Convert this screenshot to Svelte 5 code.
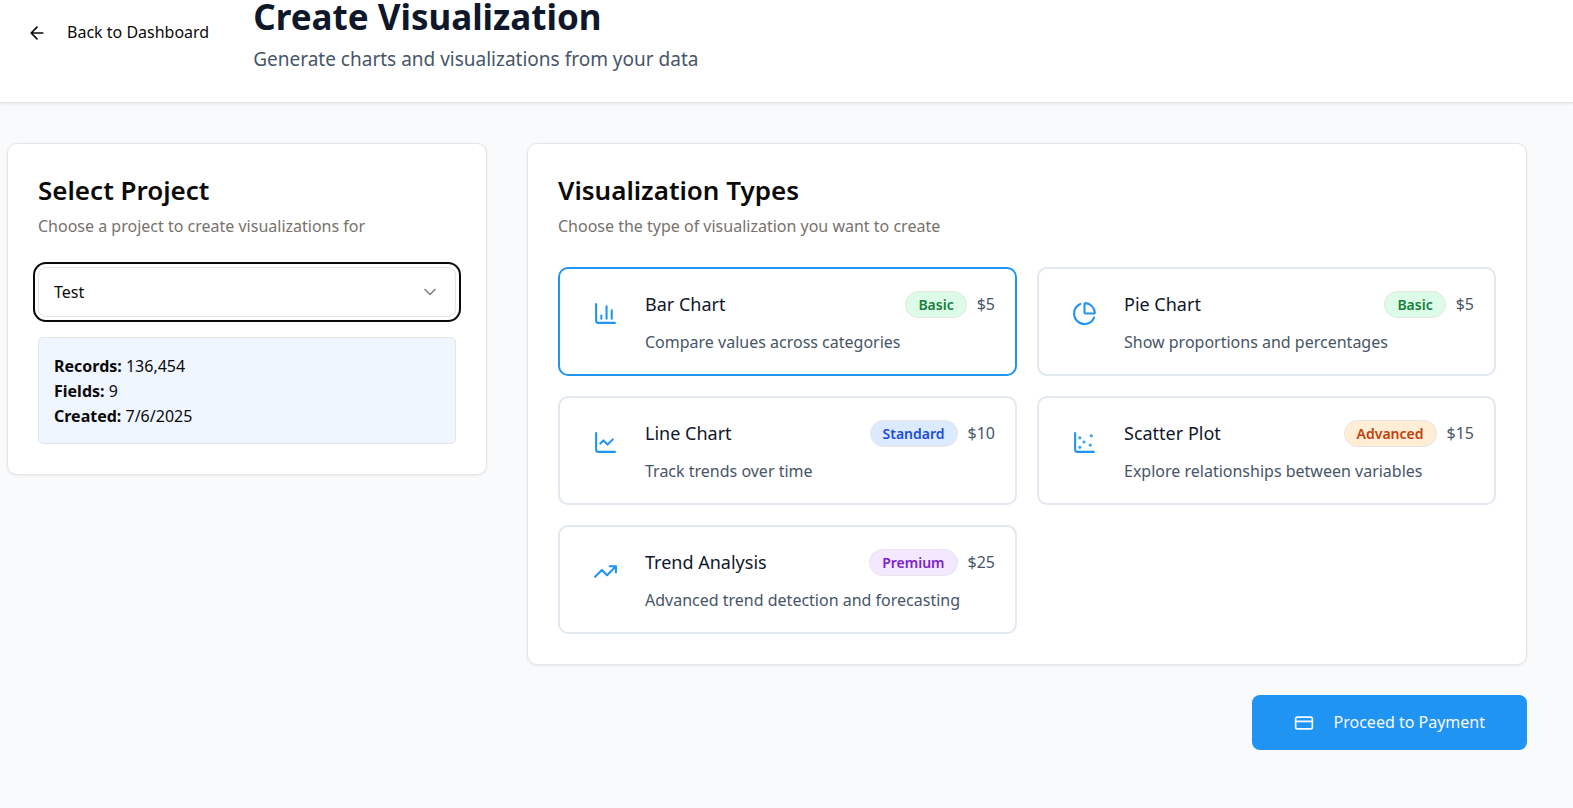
<script>
  const projects = [{ id: 'test', name: 'Test', records: '136,454', fields: 9, created: '7/6/2025' }];
  const types = [
    { id: 'bar', name: 'Bar Chart', text: 'Compare values across categories', tier: 'Basic', price: 5 },
    { id: 'pie', name: 'Pie Chart', text: 'Show proportions and percentages', tier: 'Basic', price: 5 },
    { id: 'line', name: 'Line Chart', text: 'Track trends over time', tier: 'Standard', price: 10 },
    { id: 'scatter', name: 'Scatter Plot', text: 'Explore relationships between variables', tier: 'Advanced', price: 15 },
    { id: 'trend', name: 'Trend Analysis', text: 'Advanced trend detection and forecasting', tier: 'Premium', price: 25 }
  ];

  let projectId = $state('test');
  let selected = $state('bar');
  let project = $derived(projects.find((p) => p.id === projectId));
</script>

{#snippet icon(name)}
  <svg class="icon {name}" viewBox="0 0 24 24" aria-hidden="true">
    {#if name === 'bar' || name === 'line' || name === 'scatter'}
      <path d="M3 3v16a2 2 0 0 0 2 2h16" />
    {/if}
    {#if name === 'bar'}
      <path d="M18 17V9M13 17V5M8 17v-3" />
    {:else if name === 'line'}
      <path d="m19 9-5 5-4-4-3 3" />
    {:else if name === 'scatter'}
      <g fill="currentColor">
        <circle cx="7.5" cy="7.5" r=".5" />
        <circle cx="18.5" cy="5.5" r=".5" />
        <circle cx="11.5" cy="11.5" r=".5" />
        <circle cx="7.5" cy="16.5" r=".5" />
        <circle cx="17.5" cy="14.5" r=".5" />
      </g>
    {:else if name === 'pie'}
      <path d="M21 12c.552 0 1.005-.449.95-.998a10 10 0 0 0-8.953-8.951c-.55-.055-.998.398-.998.95v8a1 1 0 0 0 1 1z" />
      <path d="M21.21 15.89A10 10 0 1 1 8 2.83" />
    {:else if name === 'trend'}
      <path d="M22 7l-8.500 8.500-5-5L2 17M16 7h6v6" />
    {:else if name === 'back'}
      <path d="m12 19-7-7 7-7M19 12H5" />
    {:else if name === 'card-icon'}
      <rect width="20" height="14" x="2" y="5" rx="2" />
      <path d="M2 10h20" />
    {:else if name === 'chevron'}
      <path d="m6 9 6 6 6-6" />
    {/if}
  </svg>
{/snippet}

<div class="page">
  <header>
    <button class="back-button" type="button">
      {@render icon('back')}
      Back to Dashboard
    </button>
    <div>
      <h1>Create Visualization</h1>
      <p>Generate charts and visualizations from your data</p>
    </div>
  </header>

  <main>
    <section class="card">
      <h2>Select Project</h2>
      <p class="hint">Choose a project to create visualizations for</p>
      <div class="select">
        <select aria-label="Project" bind:value={projectId}>
          {#each projects as p}
            <option value={p.id}>{p.name}</option>
          {/each}
        </select>
        {@render icon('chevron')}
      </div>
      <div class="info">
        <div><strong>Records:</strong> {project.records}</div>
        <div><strong>Fields:</strong> {project.fields}</div>
        <div><strong>Created:</strong> {project.created}</div>
      </div>
    </section>

    <div class="wide">
      <section class="card">
        <h2>Visualization Types</h2>
        <p class="hint">Choose the type of visualization you want to create</p>
        <div class="types">
          {#each types as t}
            <button
              class="type"
              class:selected={selected === t.id}
              type="button"
              aria-pressed={selected === t.id}
              onclick={() => (selected = t.id)}
            >
              <span class="type-icon">{@render icon(t.id)}</span>
              <span class="type-body">
                <span class="type-top">
                  <span class="name">{t.name}</span>
                  <span class="badge {t.tier.toLowerCase()}">{t.tier}</span>
                  <span class="price">${t.price}</span>
                </span>
                <span class="text">{t.text}</span>
              </span>
            </button>
          {/each}
        </div>
      </section>
      <button class="pay" type="button">
        {@render icon('card-icon')}
        Proceed to Payment
      </button>
    </div>
  </main>
</div>

<style>
  :global(body) {
    background: #f8fafc;
  }
  .page {
    min-height: 100vh;
    background: #f8fafc;
    color: #0c0a09;
    font: 16px/25px 'Noto Sans', 'Open Sans', sans-serif;
  }
  .page *,
  .page {
    box-sizing: border-box;
  }
  h1,
  h2,
  p {
    margin: 0;
  }
  button,
  select {
    font: inherit;
    color: inherit;
    cursor: pointer;
  }
  .icon {
    display: block;
    flex: none;
    width: 20px;
    height: 20px;
    fill: none;
    stroke: currentColor;
    stroke-width: 2;
    stroke-linecap: round;
    stroke-linejoin: round;
  }
  header {
    display: flex;
    align-items: flex-start;
    gap: 24px;
    padding: 0 7px 28px;
    background: #fff;
    border-bottom: 1px solid #e7e5e4;
    box-shadow: 0 1px 3px rgb(0 0 0 / 8%);
  }
  .back-button {
    display: flex;
    align-items: center;
    gap: 20px;
    padding: 20px;
    border: 0;
    background: none;
  }
  h1 {
    color: #0f172a;
    font-size: 35px;
    line-height: 34px;
    font-weight: 700;
  }
  header p {
    margin-top: 10px;
    color: #475569;
    font-size: 19px;
    line-height: 30px;
  }
  main {
    display: grid;
    grid-template-columns: repeat(3, minmax(0, 1fr));
    align-items: start;
    gap: 40px;
    padding: 40px 46px 40px 7px;
  }
  .wide {
    grid-column: span 2;
    display: flex;
    flex-direction: column;
    gap: 30px;
  }
  .card {
    padding: 30px;
    background: #fff;
    border: 1px solid #e7e5e4;
    border-radius: 10px;
    box-shadow: 0 1px 3px rgb(0 0 0 / 7%);
  }
  h2 {
    font-size: 26px;
    line-height: 32px;
    font-weight: 600;
  }
  .hint {
    margin: 8px 0 28px;
    color: #78716c;
  }
  .select {
    display: grid;
    align-items: center;
    margin-bottom: 20px;
  }
  .select > * {
    grid-area: 1 / 1;
  }
  .select :global(.icon) {
    justify-self: end;
    margin-right: 16px;
    color: #858483;
    pointer-events: none;
  }
  select {
    width: 100%;
    height: 50px;
    padding: 0 15px;
    appearance: none;
    background: #fff;
    border: 1px solid #e7e5e4;
    border-radius: 8px;
    outline: none;
    box-shadow: 0 0 0 3px #fff, 0 0 0 5px #0c0a09;
  }
  .info {
    padding: 16px 15px 14px;
    background: #eff6ff;
    border: 1px solid #e2e5e9;
    border-radius: 5px;
  }
  .types {
    display: grid;
    grid-template-columns: repeat(2, minmax(0, 1fr));
    gap: 20px;
  }
  .type {
    display: flex;
    gap: 14px;
    padding: 20px 20px 19px;
    text-align: left;
    background: #fff;
    border: 2px solid #e2e8f0;
    border-radius: 10px;
  }
  .type.selected {
    border-color: #2094f3;
  }
  .type-icon {
    padding: 12px 13px;
    color: #2094f3;
  }
  .type-icon :global(.icon) {
    width: 25px;
    height: 25px;
  }
  .type-body {
    flex: 1;
    display: flex;
    flex-direction: column;
    gap: 11px;
    min-width: 0;
  }
  .type-top {
    display: flex;
    align-items: center;
    gap: 10px;
    height: 30px;
  }
  .name {
    flex: 1;
    color: #0f172a;
    font-size: 18px;
  }
  .badge {
    padding: 0 12px;
    border: 1px solid #e7e5e4;
    border-radius: 14px;
    font-size: 14px;
    font-weight: 600;
  }
  .basic {
    background: #dcfce7;
    color: #15803d;
  }
  .standard {
    background: #dbeafe;
    color: #1d4ed8;
  }
  .advanced {
    background: #ffedd5;
    color: #c2410c;
  }
  .premium {
    background: #f3e8ff;
    color: #7e22ce;
  }
  .price,
  .text {
    color: #475569;
  }
  .pay {
    align-self: flex-end;
    display: flex;
    align-items: center;
    gap: 20px;
    padding: 15px 42px;
    color: #f8fafc;
    background: #2094f3;
    border: 0;
    border-radius: 8px;
  }
</style>
